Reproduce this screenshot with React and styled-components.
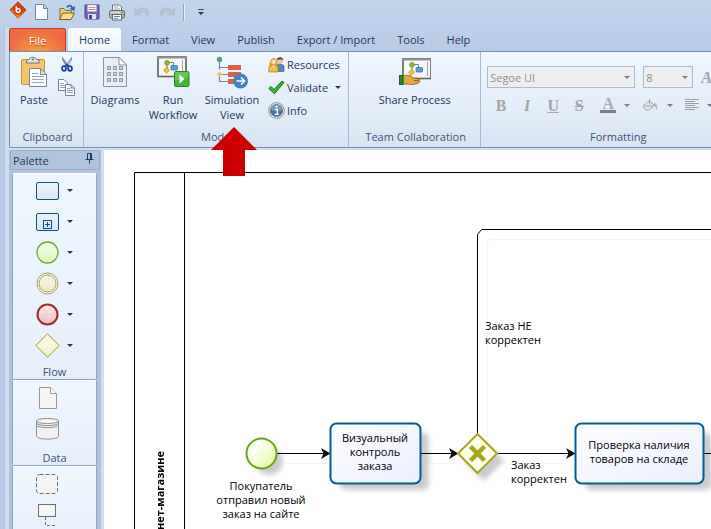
import React, { useState } from "react";
import styled, { createGlobalStyle } from "styled-components";

const TABS = [
  "Home",
  "Format",
  "View",
  "Publish",
  "Export / Import",
  "Tools",
  "Help",
];

/* ---------- quick access icons ---------- */

const LogoIcon = () => (
  <svg width="18" height="18" viewBox="0 0 18 18" aria-hidden="true">
    <path d="M9 0.8 L17 9 L9 17.2 L1 9 Z" fill="#d9480f" stroke="#b5330a" />
    <path d="M9 17 L1.5 9.2 L5 8 L9 13 L15 10.5 Z" fill="#f08a1d" />
    <circle cx="9" cy="9" r="4.8" fill="#d1390c" />
    <path
      d="M7.3 5.2 V11.2 M7.3 9.3 a1.9 1.9 0 1 1 0 0.4"
      fill="none"
      stroke="#fff"
      strokeWidth="1.5"
    />
  </svg>
);

const NewIcon = () => (
  <svg width="16" height="17" viewBox="0 0 16 17" aria-hidden="true">
    <path d="M1.5 0.500 H9.5 L13.5 4.5 V15.5 H1.5 Z" fill="#fbfdff" stroke="#7485a0" />
    <path d="M9.5 0.500 V4.5 H13.5 Z" fill="#d5dfed" stroke="#7485a0" />
  </svg>
);

const OpenIcon = () => (
  <svg width="18" height="17" viewBox="0 0 18 17" aria-hidden="true">
    <path d="M2 15 V4.5 H6 L7.5 6.5 H13.5 V9" fill="#f5d07c" stroke="#8c6b26" />
    <path d="M1.5 15.5 L5 9 H16.5 L13 15.5 Z" fill="#fbdd8c" stroke="#7d5d1c" />
    <path
      d="M9 3.5 C10 1 13 0.8 14.5 3.8"
      fill="none"
      stroke="#2b67b9"
      strokeWidth="1.8"
    />
    <path d="M11.7 4.4 L17.3 2.2 L16.2 7.2 Z" fill="#2b67b9" />
  </svg>
);

const SaveIcon = () => (
  <svg width="16" height="16" viewBox="0 0 16 16" aria-hidden="true">
    <path d="M1 1 H15 V15 H2.5 L1 13.5 Z" fill="#7465b8" stroke="#51449a" />
    <rect x="3.5" y="1.2" width="9" height="6.3" fill="#fff" />
    <path d="M4.5 3.5 H11.5 M4.5 5.5 H11.5" stroke="#c88b92" />
    <rect x="4" y="10" width="8" height="5" fill="#dfe3ee" />
    <rect x="5.2" y="11" width="2.6" height="4" fill="#3d3566" />
  </svg>
);

const PrintIcon = () => (
  <svg width="18" height="17" viewBox="0 0 18 17" aria-hidden="true">
    <path d="M4.5 7 V1 H11.5 L13.5 3 V7" fill="#fff" stroke="#777" />
    <path d="M6 3 H10 M6 5 H12" stroke="#9aa0a8" />
    <rect x="1.5" y="6.5" width="15" height="7.5" rx="1.5" fill="#a4a7ad" stroke="#6d7076" />
    <rect x="2.5" y="7.5" width="13" height="2" fill="#d6d9dd" />
    <rect x="13" y="7.6" width="2" height="1.6" fill="#4cae3a" />
    <rect x="4.5" y="10.5" width="9" height="5.5" fill="#fafcff" stroke="#666b73" />
    <path d="M6 12.5 H12 M6 14.3 H10" stroke="#5a89c6" />
  </svg>
);

const UndoIcon = ({ flip }) => (
  <svg width="18" height="14" viewBox="0 0 18 14" aria-hidden="true">
    <g transform={flip ? "translate(18 0) scale(-1 1)" : undefined}>
      <path
        d="M1.500 3 V10 H8.500 L6.200 7.800 C8.500 6 11.500 6.500 13.500 9.500 L13 12.500 C18 8.500 15.500 3.500 11 3 C8 2.700 5.500 3.500 3.800 5.400 Z"
        fill="#b8c3d3"
        stroke="#a9b5c7"
        strokeWidth="0.600"
      />
    </g>
  </svg>
);

/* ---------- ribbon icons ---------- */

const PasteIcon = () => (
  <svg width="28" height="32" viewBox="0 0 28 32" aria-hidden="true">
    <rect x="1.500" y="3.500" width="23" height="25" rx="1.500" fill="#f4c56c" stroke="#c8913a" />
    <path d="M6.500 7 V5 C6.500 3.500 9 4 9.500 3 C10 0.800 15.500 0.800 16 3 C16.500 4 19 3.500 19 5 V7 Z" fill="#e4e7eb" stroke="#6c7077" />
    <circle cx="12.800" cy="3.600" r="1.100" fill="#6c7077" />
    <path d="M9.500 12.500 H20.500 L26.500 18.500 V30.500 H9.500 Z" fill="#fcfdff" stroke="#75879f" />
    <path d="M20.500 12.500 V18.500 H26.500 Z" fill="#d4deec" stroke="#75879f" />
    <path d="M12 17.500 H18 M12 20.500 H24 M12 23.500 H24 M12 26.500 H24" stroke="#9aa9bf" />
  </svg>
);

const CutIcon = () => (
  <svg width="12" height="15" viewBox="0 0 12 15" aria-hidden="true">
    <path d="M1.500 0.500 L7.500 9 L6 10 L1.500 3 Z" fill="#8a97ab" stroke="#59677e" strokeWidth="0.600" />
    <path d="M10.500 0.500 L4.500 9 L6 10 L10.500 3 Z" fill="#c7d0de" stroke="#59677e" strokeWidth="0.600" />
    <ellipse cx="3" cy="11.500" rx="1.900" ry="2.300" fill="none" stroke="#1b3f9c" strokeWidth="1.800" />
    <ellipse cx="9" cy="11.500" rx="1.900" ry="2.300" fill="none" stroke="#1b3f9c" strokeWidth="1.800" />
    <path d="M4 9.500 L6 7.500 L8 9.500" fill="none" stroke="#1b3f9c" strokeWidth="1.500" />
  </svg>
);

const CopyIcon = () => (
  <svg width="17" height="17" viewBox="0 0 17 17" aria-hidden="true">
    <path d="M0.500 0.500 H6 L9.500 4 V11.500 H0.500 Z" fill="#fafcff" stroke="#72839c" />
    <path d="M2 4.500 H6 M2 6.500 H7 M2 8.500 H7" stroke="#93a3ba" />
    <path d="M7.500 5.500 H13 L16.500 9 V16.500 H7.500 Z" fill="#fafcff" stroke="#72839c" />
    <path d="M13 5.500 V9 H16.500" fill="none" stroke="#72839c" />
    <path d="M9 9.500 H12 M9 11.500 H15 M9 13.500 H15" stroke="#93a3ba" />
  </svg>
);

const DiagramsIcon = () => (
  <svg width="26" height="32" viewBox="0 0 26 32" aria-hidden="true">
    <path d="M1.500 1.500 H17 L24.500 9 V30.500 H1.500 Z" fill="#e9eef5" stroke="#8793a5" />
    <path d="M17 1.500 V9 H24.500 Z" fill="#fff" stroke="#8793a5" />
    {[10, 16, 22].map((y) =>
      [5, 11, 17].map((x) => (
        <rect key={`${x}-${y}`} x={x + 0.5} y={y + 0.5} width="3" height="3" fill="#c7ccd3" stroke="#969da8" />
      ))
    )}
  </svg>
);

const Board = () => (
  <>
    <rect x="1" y="1" width="28" height="19.500" fill="#f7f7f7" stroke="#5f6063" strokeWidth="1.600" />
    <rect x="0.500" y="0.500" width="29" height="2" fill="#8e8f92" />
    <path d="M10 6.500 H16.500 V10 M10 6.500 V14" fill="none" stroke="#75787c" />
    <path d="M25.500 4 V18" stroke="#a2a4a8" />
    <circle cx="10" cy="6.800" r="2.400" fill="#8dbb2e" stroke="#678c1a" strokeWidth="0.700" />
    <path d="M9.500 11.400 L12.400 14.300 L9.500 17.200 L6.600 14.300 Z" fill="#fbc916" stroke="#ac8610" strokeWidth="0.700" />
    <rect x="14" y="9.500" width="6.500" height="4.500" rx="1" fill="#5b9fd8" stroke="#396f9e" strokeWidth="0.800" />
  </>
);

const RunIcon = () => (
  <svg width="33" height="32" viewBox="0 0 33 32" aria-hidden="true">
    <Board />
    <rect x="17.500" y="15.500" width="14.500" height="15" rx="1.500" fill="#45b535" stroke="#258a1c" />
    <path d="M18 16 H31.500 V21 L18 25 Z" fill="#7ed16d" opacity="0.600" />
    <path d="M22.500 18.500 L27.500 23 L22.500 27.500 Z" fill="#fff" />
  </svg>
);

const SimulationIcon = () => (
  <svg width="32" height="33" viewBox="0 0 32 33" aria-hidden="true">
    <path d="M3.500 5 V13.500 M3.500 11.500 H12 M6 18.500 H12 M3.500 21 V25.500 H12" fill="none" stroke="#80858d" strokeWidth="1.200" />
    <circle cx="3.500" cy="3.500" r="2.700" fill="#5c9b83" />
    <path d="M3.500 15.500 L6.400 18.400 L3.500 21.300 L0.600 18.400 Z" fill="#f3be70" />
    <rect x="12" y="9" width="13" height="5" fill="#dc6041" />
    <rect x="12" y="16" width="13" height="5" fill="#dc6041" />
    <rect x="12" y="23" width="8" height="5" fill="#dc6041" />
    <circle cx="24.500" cy="25" r="7.500" fill="#4482c0" />
    <path d="M20.500 25 H28 M25 21.500 L28.500 25 L25 28.500" fill="none" stroke="#fff" strokeWidth="1.700" />
  </svg>
);

const ShareIcon = () => (
  <svg width="32" height="28" viewBox="0 0 32 28" aria-hidden="true">
    <g transform="translate(3 0)">
      <Board />
    </g>
    <path d="M4 18.500 C8 16 12 17.500 14 20 L20 20.500 C22 22 18 22.500 15 22.500 L21 23 C21 25.500 13 27.500 9 26 L4 26 Z" fill="#e3a843" stroke="#8e601a" strokeWidth="0.900" />
    <rect x="0.500" y="17.500" width="3.500" height="9" fill="#258b2c" stroke="#11661a" />
  </svg>
);

const ResourcesIcon = () => (
  <svg width="17" height="17" viewBox="0 0 17 17" aria-hidden="true">
    <circle cx="12" cy="4.500" r="3" fill="#f0c69b" />
    <path d="M8.700 4.500 C8.500 0 15.500 0 15.300 4.500 C14 3 10.500 3.500 8.700 4.500 Z" fill="#5a422e" />
    <path d="M8 15.500 V10 C9 7.500 15 7.500 16 10 V15.500 Z" fill="#5a83bd" stroke="#34598f" strokeWidth="0.600" />
    <path d="M2 10 C1 0 10.500 0 9 10 Z" fill="#e2a630" stroke="#b67d18" strokeWidth="0.600" />
    <circle cx="5.600" cy="5.800" r="2.400" fill="#fbd9b4" />
    <path d="M0.800 16 V11 C2 8.500 9 8.500 10 11 V16 Z" fill="#f0be4b" stroke="#b67d18" strokeWidth="0.700" />
    <path d="M4.200 9.200 L5.500 13 L7 9.200 Z" fill="#fbd9b4" />
  </svg>
);

const ValidateIcon = () => (
  <svg width="17" height="15" viewBox="0 0 17 15" aria-hidden="true">
    <path d="M0.800 8.500 L3 6.500 L6 9.500 L14 1 L16 2.500 L6.500 13.800 Z" fill="#37b533" stroke="#13781a" />
  </svg>
);

const InfoIcon = () => (
  <svg width="17" height="17" viewBox="0 0 17 17" aria-hidden="true">
    <circle cx="8.500" cy="8.500" r="7.800" fill="#e7ecf2" stroke="#7f8da0" />
    <circle cx="8.500" cy="8.500" r="6" fill="#4d719e" stroke="#38577e" strokeWidth="0.700" />
    <path d="M3 8 A5.500 5.500 0 0 1 14 8 C11 9.500 6 9.500 3 8 Z" fill="#9db5d0" opacity="0.600" />
    <path d="M7 7.300 H9.300 V12 M6.700 12.300 H10.700" fill="none" stroke="#fff" strokeWidth="1.300" />
    <circle cx="8.600" cy="4.700" r="1.100" fill="#fff" />
  </svg>
);

const BucketIcon = () => (
  <svg width="17" height="14" viewBox="0 0 17 14" aria-hidden="true">
    <path d="M1 8 L7.500 2.500 L12.500 7.500 L7 12 H4 Z" fill="#e4e5e7" stroke="#a4a7ab" />
    <path d="M7.500 6 V1 M3 8 H12" fill="none" stroke="#a4a7ab" />
    <path d="M12 5 C15 5.500 16 8 15 12 C13.500 11 13.500 8 12 7 Z" fill="#b5b7ba" />
  </svg>
);

const AlignIcon = () => (
  <svg width="14" height="12" viewBox="0 0 14 12" aria-hidden="true">
    <path
      d="M0 0.500 H14 M0 2.500 H10 M0 4.500 H14 M0 6.500 H10 M0 8.500 H14 M0 10.500 H10"
      stroke="#9fa1a4"
    />
  </svg>
);

/* ---------- palette icons ---------- */

const PinIcon = () => (
  <svg width="9" height="11" viewBox="0 0 9 11" aria-hidden="true">
    <path d="M2.500 6 V0.500 H6.500 V6 M0.500 6.500 H8.500 M4.500 7 V10.500" fill="none" stroke="#1e3a66" />
    <path d="M5.500 1 V6" stroke="#1e3a66" />
  </svg>
);

const shapes = {
  task: (
    <rect x="1.500" y="4.500" width="22" height="17" rx="1.500" fill="url(#task)" stroke="#00558f" />
  ),
  subprocess: (
    <>
      <rect x="1.500" y="4.500" width="22" height="17" rx="1.500" fill="url(#task)" stroke="#00558f" />
      <rect x="8.500" y="11.500" width="8" height="8" fill="none" stroke="#00558f" />
      <path d="M10 15.500 H15 M12.500 13 V18" stroke="#00558f" />
    </>
  ),
  start: <circle cx="12.500" cy="12.500" r="10.500" fill="url(#green)" stroke="#6dac2b" strokeWidth="1.300" />,
  intermediate: (
    <>
      <circle cx="12.500" cy="12.500" r="10.500" fill="#f8f6e8" stroke="#a8a270" />
      <circle cx="12.500" cy="12.500" r="8.500" fill="url(#sand)" stroke="#a8a270" />
    </>
  ),
  end: <circle cx="12.500" cy="12.500" r="10" fill="url(#red)" stroke="#a52a2a" strokeWidth="2" />,
  gateway: <path d="M12.500 0.800 L24.200 12.500 L12.500 24.200 L0.800 12.500 Z" fill="url(#gate)" stroke="#9a9a1c" />,
  data: (
    <>
      <path d="M4.500 2.500 H15.500 L21.500 8.500 V23.500 H4.500 Z" fill="#f4f4f4" stroke="#979797" />
      <path d="M15.500 2.500 V8.500 H21.500" fill="#fff" stroke="#979797" />
    </>
  ),
  store: (
    <>
      <path d="M1.500 5 V20.500 C3 24 22 24 23.500 20.500 V5" fill="#f1f1f1" stroke="#8f8f8f" />
      <ellipse cx="12.500" cy="5" rx="11" ry="2.500" fill="#f6f6f6" stroke="#8f8f8f" />
      <path d="M1.500 7 C3 10.500 22 10.500 23.500 7 M1.500 9 C3 12.500 22 12.500 23.500 9" fill="none" stroke="#8f8f8f" />
    </>
  ),
  group: (
    <rect x="1.500" y="3.500" width="21" height="19" rx="3" fill="#f4f4f5" stroke="#6b6b6b" strokeDasharray="4 2" />
  ),
  annotation: (
    <>
      <rect x="3.500" y="2.500" width="17" height="12" fill="#f6f6f6" stroke="#6f6f6f" />
      <path d="M10.500 15 V23.500 H22" fill="none" stroke="#6f6f6f" strokeDasharray="3 2" />
    </>
  ),
};

const GRADIENTS = [
  ["task", "#f1f1f5", "#d9e5fb"],
  ["green", "#f6fcee", "#dcf7b8"],
  ["sand", "#f8f5e4", "#eee8bd"],
  ["red", "#fbeeee", "#ecbcc0"],
  ["gate", "#fdfdf3", "#efefc4"],
];

const PALETTE = [
  {
    title: "Flow",
    items: ["task", "subprocess", "start", "intermediate", "end", "gateway"],
    menu: true,
  },
  { title: "Data", items: ["data", "store"] },
  { title: "", items: ["group", "annotation"] },
];

const Process = () => (
  <Canvas>
    <Drawing width="900" height="600" aria-hidden="true">
      <defs>
        {GRADIENTS.map(([id, from, to]) => (
          <linearGradient key={id} id={id} x1="0" y1="0" x2="0" y2="1">
            <stop offset="0" stopColor={from} />
            <stop offset="1" stopColor={to} />
          </linearGradient>
        ))}
        <linearGradient id="box" x1="0" y1="0" x2="1" y2="1">
          <stop offset="0" stopColor="#ffffff" />
          <stop offset="1" stopColor="#ebeeff" />
        </linearGradient>
        <linearGradient id="event" x1="0" y1="0" x2="1" y2="1">
          <stop offset="0.200" stopColor="#ffffff" />
          <stop offset="1" stopColor="#e0fa9c" />
        </linearGradient>
        <filter id="soft" x="-30%" y="-30%" width="160%" height="160%">
          <feGaussianBlur stdDeviation="2.500" />
        </filter>
        <marker id="arrow" markerUnits="userSpaceOnUse" markerWidth="10" markerHeight="12" refX="9" refY="6" orient="auto">
          <path d="M0 0.500 L9.500 6 L0 11.500 L2.500 6 Z" fill="#111" />
        </marker>
      </defs>
      <path d="M900 22.500 H30.500 V600 M80.500 22.500 V600" fill="none" stroke="#000" />
      <path d="M383.500 292 V94 Q383.500 89.500 389 89.500 H900 M182 313.500 H226 M430 313.500 H456 M326 313.500 H344" fill="none" stroke="#f4f4f4" />
      <g fill="#000" opacity="0.200" filter="url(#soft)">
        <circle cx="165" cy="311" r="14" />
        <rect x="236" y="283" width="89" height="57" rx="6" />
        <path d="M380 291 L400 311 L380 331 L360 311 Z" />
        <rect x="481" y="283" width="127" height="57" rx="6" />
      </g>
      <path d="M373.500 284 V84.500 L377.500 79.500 H900" fill="none" stroke="#000" />
      <g stroke="#000">
        <path d="M172 303.500 H226" markerEnd="url(#arrow)" />
        <path d="M317 303.500 H354" markerEnd="url(#arrow)" />
        <path d="M393 303.500 H471" markerEnd="url(#arrow)" />
        <path d="M600 303.500 H660" />
      </g>
      <circle cx="157.500" cy="303.500" r="15" fill="url(#event)" stroke="#66a811" strokeWidth="2" />
      <rect x="226.500" y="273.500" width="90" height="60" rx="6" fill="url(#box)" stroke="#035c93" strokeWidth="2" />
      <rect x="471.500" y="273.500" width="128" height="60" rx="6" fill="url(#box)" stroke="#035c93" strokeWidth="2" />
      <path d="M373.500 284 L393 303.500 L373.500 323 L354 303.500 Z" fill="#fefee9" stroke="#a6a61d" strokeWidth="2" />
      <path d="M366.500 296.500 L380.500 310.500 M380.500 296.500 L366.500 310.500" stroke="#a6a61d" strokeWidth="4.500" />
    </Drawing>
    <Lane>интернет-магазине</Lane>
    <Caption $x={100} $y={329} $w={114}>
      Покупатель
      <br />
      отправил новый
      <br />
      заказ на сайте
    </Caption>
    <Caption $x={225} $y={281} $w={92}>
      Визуальный
      <br />
      контроль
      <br />
      заказа
    </Caption>
    <Caption $x={381} $y={169} $w={80} $left>
      Заказ НЕ
      <br />
      корректен
    </Caption>
    <Caption $x={407} $y={308} $w={62} $left>
      Заказ
      <br />
      корректен
    </Caption>
    <Caption $x={470} $y={288} $w={130}>
      Проверка наличия
      <br />
      товаров на складе
    </Caption>
  </Canvas>
);

const App = () => {
  const [tab, setTab] = useState("Home");

  return (
    <Page>
      <GlobalStyle />
      <QuickBar>
        <AppButton aria-label="Application menu"><LogoIcon /></AppButton>
        <QuickButton aria-label="New"><NewIcon /></QuickButton>
        <QuickButton aria-label="Open"><OpenIcon /></QuickButton>
        <QuickButton aria-label="Save"><SaveIcon /></QuickButton>
        <QuickButton aria-label="Print"><PrintIcon /></QuickButton>
        <QuickButton aria-label="Undo" disabled><UndoIcon /></QuickButton>
        <QuickButton aria-label="Redo" disabled><UndoIcon flip /></QuickButton>
        <QuickDivider />
        <QuickMenu aria-label="Customize">
          <Caret />
        </QuickMenu>
      </QuickBar>
      <Frame>
        <Tabs>
          <FileTab>File</FileTab>
          {TABS.map((name) => (
            <Tab key={name} $active={name === tab} onClick={() => setTab(name)}>
              {name}
            </Tab>
          ))}
        </Tabs>
        <Ribbon>
          <Group>
            <Tools>
              <BigButton $w={48}>
                <IconBox><PasteIcon /></IconBox>
                Paste
              </BigButton>
              <Stack $narrow>
                <SmallButton aria-label="Cut"><CutIcon /></SmallButton>
                <SmallButton aria-label="Copy"><CopyIcon /></SmallButton>
              </Stack>
            </Tools>
            <GroupTitle>Clipboard</GroupTitle>
          </Group>
          <Group>
            <Tools>
              <BigButton $w={62}>
                <IconBox><DiagramsIcon /></IconBox>
                Diagrams
              </BigButton>
              <BigButton $w={54}>
                <IconBox><RunIcon /></IconBox>
                Run
                <br />
                Workflow
              </BigButton>
              <BigButton $w={64}>
                <IconBox><SimulationIcon /></IconBox>
                Simulation
                <br />
                View
                <Pointer width="46" height="49" viewBox="0 0 46 49" aria-hidden="true">
                  <path d="M23 0 L46 23 H34 V49 H12 V23 H0 Z" fill="#cc0000" />
                </Pointer>
              </BigButton>
              <Stack>
                <SmallButton><ResourcesIcon />Resources</SmallButton>
                <SmallButton><ValidateIcon />Validate<MenuCaret /></SmallButton>
                <SmallButton><InfoIcon />Info</SmallButton>
              </Stack>
            </Tools>
            <GroupTitle>Model</GroupTitle>
          </Group>
          <Group>
            <Tools>
              <BigButton $w={131}>
                <IconBox><ShareIcon /></IconBox>
                Share Process
              </BigButton>
            </Tools>
            <GroupTitle>Team Collaboration</GroupTitle>
          </Group>
          <Group>
            <FormatTools>
              <FormatRow>
                <Combo $w={148}>
                  <select aria-label="Font" disabled>
                    <option>Segoe UI</option>
                  </select>
                  <Caret $muted />
                </Combo>
                <Combo $w={50}>
                  <select aria-label="Font size" disabled>
                    <option>8</option>
                  </select>
                  <Caret $muted />
                </Combo>
                <FontButton $italic disabled aria-label="Grow font">A</FontButton>
              </FormatRow>
              <FormatRow>
                <FontButton disabled>B</FontButton>
                <FontButton $italic disabled>I</FontButton>
                <FontButton $line="underline" disabled>U</FontButton>
                <FontButton $line="line-through" disabled>S</FontButton>
                <FormatMenu disabled aria-label="Font color">
                  <ColorLetter>A</ColorLetter>
                  <Caret $muted />
                </FormatMenu>
                <FormatMenu disabled aria-label="Fill color">
                  <BucketIcon />
                  <Caret $muted />
                </FormatMenu>
                <FormatMenu disabled aria-label="Align">
                  <AlignIcon />
                  <Caret $muted />
                </FormatMenu>
              </FormatRow>
            </FormatTools>
            <GroupTitle>Formatting</GroupTitle>
          </Group>
        </Ribbon>
        <Workspace>
          <Palette>
            <PaletteHead>
              Palette
              <PinButton aria-label="Pin"><PinIcon /></PinButton>
            </PaletteHead>
            {PALETTE.map((section) => (
              <Section key={section.items[0]}>
                {section.items.map((item) => (
                  <Shape key={item} aria-label={item}>
                    <svg width="25" height="25" viewBox="0 0 25 25" aria-hidden="true">
                      {shapes[item]}
                    </svg>
                    {section.menu ? <Caret /> : <NoCaret />}
                  </Shape>
                ))}
                <SectionTitle $low={!section.menu}>{section.title}</SectionTitle>
              </Section>
            ))}
          </Palette>
          <Process />
        </Workspace>
      </Frame>
    </Page>
  );
};

const GlobalStyle = createGlobalStyle`
  * {
    box-sizing: border-box;
  }
  body {
    margin: 0;
    overflow: hidden;
  }
  button, select {
    font: inherit;
    color: inherit;
    margin: 0;
    padding: 0;
    border: none;
    background: none;
  }
  svg {
    flex: none;
  }
`;

const Page = styled.div`
  display: flex;
  flex-direction: column;
  height: 100vh;
  overflow: hidden;
  font-family: "Open Sans", "Noto Sans", sans-serif;
  font-size: 11px;
  line-height: 15px;
  color: #1e395b;
  background: linear-gradient(#c3d5ed, #b9cbe4 50px);
`;

const QuickBar = styled.header`
  display: flex;
  align-items: center;
  flex: none;
  height: 28px;
  padding: 0 4px 4px;
`;

const QuickButton = styled.button`
  display: flex;
  align-items: center;
  justify-content: center;
  width: 25px;
  height: 24px;
`;

const AppButton = styled(QuickButton)`
  padding: 0 0 4px 2px;
`;

const QuickDivider = styled.span`
  width: 2px;
  height: 17px;
  margin: 0 9px 0 4px;
  background: #8fa5c4;
  border-right: 1px solid #e6eefa;
`;

const Caret = styled.span`
  flex: none;
  width: 0;
  height: 0;
  border: 3px solid transparent;
  border-top-color: ${({ $muted }) => ($muted ? "#7d8086" : "#1e395b")};
  border-bottom: none;
`;

const MenuCaret = styled(Caret)`
  margin-left: 5px;
`;

const NoCaret = styled.span`
  width: 6px;
`;

const QuickMenu = styled.button`
  padding: 0 4px;

  ${Caret} {
    display: block;
  }
  &::before {
    content: "";
    display: block;
    height: 1px;
    margin-bottom: 2px;
    background: #44546c;
  }
`;

const Frame = styled.div`
  display: flex;
  flex-direction: column;
  flex: 1;
  min-height: 0;
  padding-left: 4px;
  margin-left: 3px;
  border-left: 2px solid #b4c7e4;
  background: linear-gradient(90deg, #cddcef 4px, transparent 4px);
`;

const Tabs = styled.nav`
  display: flex;
  flex: none;
  height: 23px;
`;

const Tab = styled.button`
  height: 23px;
  padding: 0 11px;
  white-space: nowrap;
  border-radius: 3px 3px 0 0;
  background: ${({ $active }) =>
    $active ? "linear-gradient(#fbfdff, #eff6fe)" : "none"};
`;

const FileTab = styled.button`
  width: 57px;
  height: 23px;
  margin-right: 2px;
  color: #fff;
  text-shadow: 0 1px 1px #a33c14;
  border: 1px solid #c9381a;
  border-bottom: none;
  border-radius: 3px 3px 0 0;
  background: radial-gradient(ellipse at 50% 110%, #fb9c3c, #ee6a45 75%);
`;

const Ribbon = styled.section`
  display: flex;
  flex: none;
  height: 97px;
  border: 1px solid #7390b6;
  border-right: none;
  border-radius: 0 0 0 2px;
  background: linear-gradient(#eff6fe, #e3edf8 60%, #d8e4f2);
`;

const Group = styled.div`
  display: flex;
  flex-direction: column;
  flex: none;
  border-right: 1px solid #a5b9d8;
`;

const Tools = styled.div`
  display: flex;
  flex: 1;
`;

const GroupTitle = styled.div`
  height: 19px;
  padding-left: 2px;
  line-height: 17px;
  text-align: center;
  color: #3e5379;
`;

const BigButton = styled.button`
  display: block;
  position: relative;
  width: ${({ $w }) => $w}px;
  padding-top: 3px;
  text-align: center;
  vertical-align: top;
  align-self: flex-start;
`;

const IconBox = styled.span`
  display: flex;
  align-items: center;
  justify-content: center;
  height: 34px;
  margin-bottom: 3px;
`;

const Pointer = styled.svg`
  position: absolute;
  z-index: 2;
  left: 11px;
  top: 75px;
`;

const Stack = styled.div`
  display: flex;
  flex-direction: column;
  align-items: flex-start;
  padding: ${({ $narrow }) => ($narrow ? "1px 8px 0 0" : "1px 7px 0 4px")};
`;

const SmallButton = styled.button`
  display: flex;
  align-items: center;
  justify-content: center;
  gap: 2px;
  min-width: 17px;
  height: 23px;
`;

const FormatTools = styled.div`
  flex: 1;
  width: 272px;
  padding: 13px 0 0 6px;
`;

const FormatRow = styled.div`
  display: flex;
  align-items: center;
  height: 24px;
  margin-bottom: 4px;
`;

const Combo = styled.label`
  display: flex;
  align-items: center;
  flex: none;
  width: ${({ $w }) => $w}px;
  height: 22px;
  margin-right: 8px;
  padding-right: 4px;
  border: 1px solid #a9bad6;
  background: #efefef;

  select {
    flex: 1;
    min-width: 0;
    padding-left: 2px;
    appearance: none;
    color: #8f9093;
    opacity: 1;
  }
`;

const FontButton = styled.button`
  flex: none;
  width: 26px;
  padding-left: 2px;
  font-family: "Liberation Serif", serif;
  font-size: 16px;
  font-weight: bold;
  font-style: ${({ $italic }) => ($italic ? "italic" : "normal")};
  text-decoration: ${({ $line }) => $line || "none"};
  text-decoration-thickness: 1px;
  color: #a3a5a9;

  ${Combo} + & {
    padding: 0;
    text-align: left;
  }
`;

const FormatMenu = styled.button`
  display: flex;
  align-items: center;
  gap: 8px;
  flex: none;
  padding: 0 3px 0 9px;
`;

const ColorLetter = styled.span`
  width: 16px;
  height: 16px;
  border-bottom: 3px solid #7d7f82;
  font-family: "Liberation Serif", serif;
  font-size: 16px;
  font-weight: bold;
  line-height: 13px;
  color: #a9abae;
`;

const Workspace = styled.main`
  display: flex;
  flex: 1;
  min-height: 0;
  padding-top: 2px;
  background: #d0deef;
`;

const Palette = styled.aside`
  flex: none;
  width: 92px;
  margin-right: 3px;
  padding: 0 4px 0 3px;
  overflow: hidden;
  background: #b0c3dc;
`;

const PaletteHead = styled.div`
  display: flex;
  align-items: center;
  justify-content: space-between;
  height: 20px;
  margin: 0 -3px 3px -2px;
  padding: 0 5px 0 2px;
  border: 1px solid #98aecb;
  border-radius: 2px;
`;

const PinButton = styled.button`
  display: flex;
  padding-bottom: 3px;
`;

const Section = styled.div`
  display: flex;
  flex-direction: column;
  padding-top: 1px;
  border: 1px solid #8da5c4;
  border-top-color: #fafdff;
  border-radius: 2px;
  background: linear-gradient(#eff6fe, #e6eff9);
`;

const Shape = styled.button`
  display: flex;
  align-items: center;
  justify-content: center;
  gap: 7px;
  height: 31px;
  padding-right: 2px;
`;

const SectionTitle = styled.div`
  height: ${({ $low }) => ($low ? 21 : 18)}px;
  line-height: ${({ $low }) => ($low ? 27 : 21)}px;
  text-align: center;
  color: #3e5379;
`;

const Canvas = styled.div`
  position: relative;
  flex: 1;
  min-width: 0;
  overflow: hidden;
  color: #000;
  background: #fff;
`;

const Drawing = styled.svg`
  position: absolute;
  left: 0;
  top: 0;
`;

const Caption = styled.div`
  position: absolute;
  left: ${({ $x }) => $x}px;
  top: ${({ $y }) => $y}px;
  width: ${({ $w }) => $w}px;
  line-height: 14px;
  white-space: nowrap;
  text-align: ${({ $left }) => ($left ? "left" : "center")};
`;

const Lane = styled.div`
  position: absolute;
  left: 48px;
  top: 301px;
  font-weight: bold;
  line-height: 15px;
  white-space: nowrap;
  writing-mode: vertical-rl;
  transform: rotate(180deg);
`;

export default App;
